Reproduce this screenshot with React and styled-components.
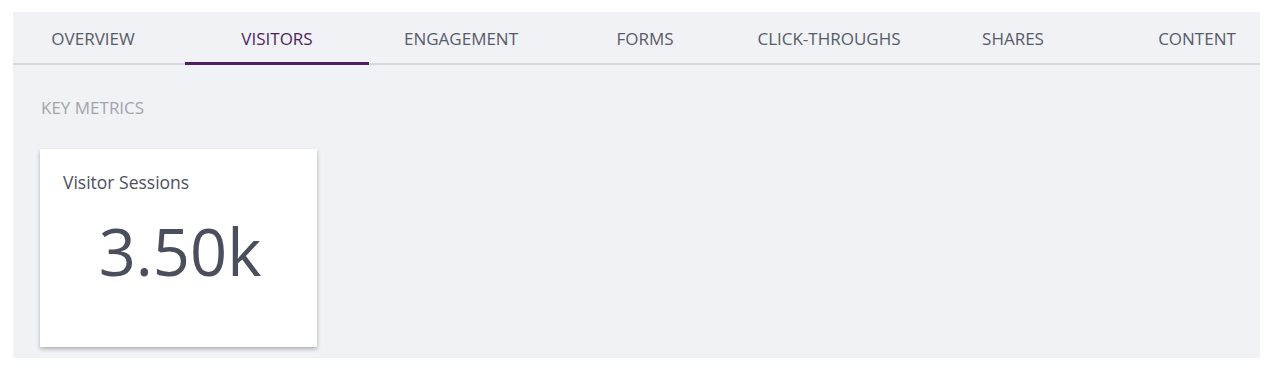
import React from "react";
import styled, { createGlobalStyle } from "styled-components";

const Global = createGlobalStyle`
  html, body { margin: 0; padding: 0; background: #ffffff; }
  body { font-family: "Open Sans", "Liberation Sans", sans-serif; }
  * { box-sizing: border-box; }
`;

const Page = styled.div`
  padding: 12px 14px 14px 13px;
  width: 1274px;
`;

const Panel = styled.div`
  background: #f1f2f6;
  height: 346px;
  overflow: hidden;
`;

const TabBar = styled.div`
  display: flex;
  height: 53px;
  border-bottom: 2px solid #d8d9de;
`;

const TabList = styled.div`
  display: flex;
  margin-left: -12px;
`;

const Tab = styled.div`
  position: relative;
  flex: none;
  width: 184px;
  height: 51px;
  display: flex;
  align-items: center;
  justify-content: center;
  padding-top: 2px;
  font-size: 17px;
  color: ${(p) => (p.$active ? "#4e1f63" : "#575b67")};
  &::after {
    content: "";
    display: ${(p) => (p.$active ? "block" : "none")};
    position: absolute;
    left: 0;
    right: 0;
    bottom: -2px;
    height: 3px;
    background: #4e1f63;
  }
`;

const Content = styled.div`
  padding: 32px 0 0 27px;
`;

const SectionLabel = styled.div`
  margin-left: 1px;
  font-size: 17px;
  color: #a2a4ac;
  line-height: 22px;
`;

const Cards = styled.div`
  display: flex;
  gap: 20px;
  margin-top: 30px;
`;

const Card = styled.div`
  width: 277px;
  height: 198px;
  background: #ffffff;
  box-shadow: 0 2px 4px rgba(0, 0, 0, 0.28);
  padding: 21px 23px 0 23px;
  display: flex;
  flex-direction: column;
`;

const CardTitle = styled.div`
  font-size: 17.5px;
  color: #4c505c;
  line-height: 24px;
`;

const CardValue = styled.div`
  margin-top: 21px;
  text-align: center;
  font-size: 65px;
  line-height: 72px;
  color: #4a4f5b;
  padding-left: 3px;
`;

const tabs = [
  "OVERVIEW",
  "VISITORS",
  "ENGAGEMENT",
  "FORMS",
  "CLICK-THROUGHS",
  "SHARES",
  "CONTENT",
];

export default function App() {
  return (
    <>
      <Global />
      <Page>
        <Panel>
          <TabBar>
            <TabList>
              {tabs.map((t) => (
                <Tab key={t} $active={t === "VISITORS"}>
                  {t}
                </Tab>
              ))}
            </TabList>
          </TabBar>
          <Content>
            <SectionLabel>KEY METRICS</SectionLabel>
            <Cards>
              <Card>
                <CardTitle>Visitor Sessions</CardTitle>
                <CardValue>3.50k</CardValue>
              </Card>
            </Cards>
          </Content>
        </Panel>
      </Page>
    </>
  );
}
